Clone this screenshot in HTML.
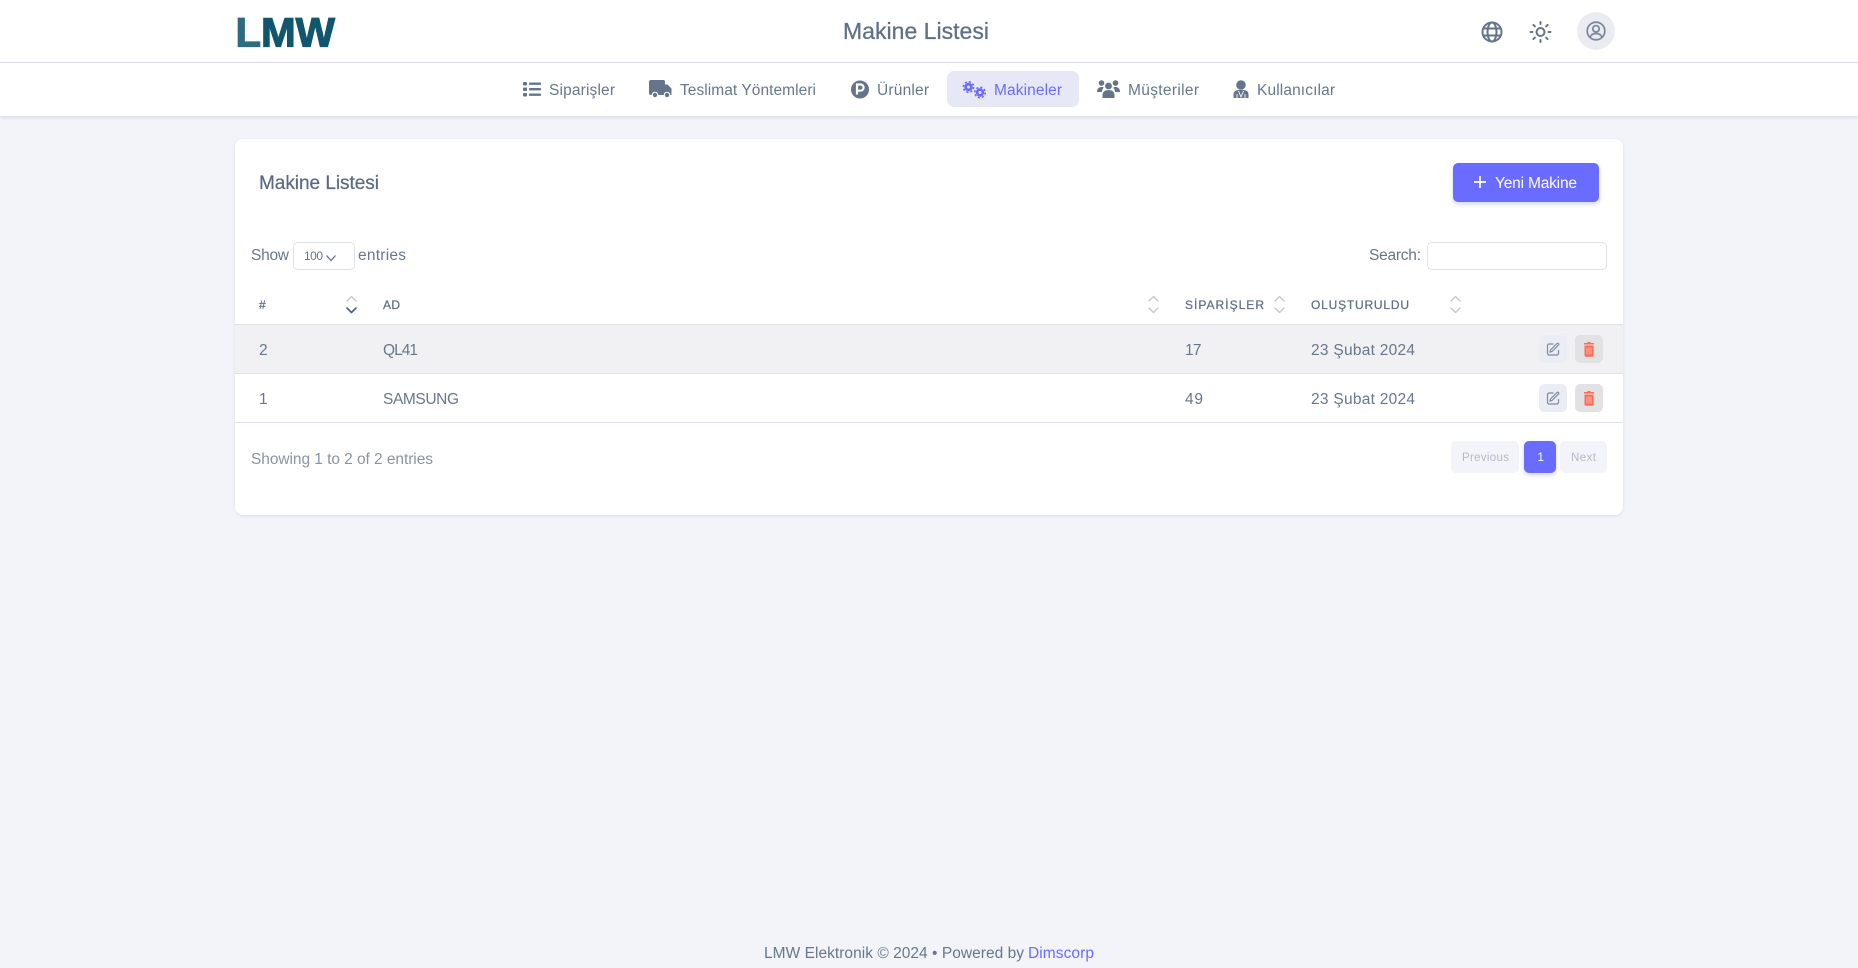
<!DOCTYPE html>
<html lang="tr">
<head>
<meta charset="utf-8">
<title>Makine Listesi</title>
<style>
html,body{margin:0;padding:0;width:1858px;height:968px;overflow:hidden;background:#f3f4f9;font-family:"Liberation Sans",sans-serif}
.b{position:absolute;box-sizing:border-box}
svg.o{position:absolute;left:0;top:0}
svg text{font-family:"Liberation Sans",sans-serif;font-size:15.5px;fill:#67778e}
.th{font-size:12px;fill:#5f6f87;stroke:#5f6f87;stroke-width:.25}
.ic{fill:#64748b}
.ch{fill:none;stroke:#c3c8d8;stroke-width:1.4;stroke-linecap:round;stroke-linejoin:round}
</style>
</head>
<body>
<div class="b" style="left:0;top:0;width:1858px;height:63px;background:#fff;border-bottom:1px solid #dfe1e8"></div>
<div class="b" style="left:0;top:63px;width:1858px;height:53px;background:#fff;box-shadow:0 1px 4px rgba(67,89,113,.18)"></div>
<div class="b" style="left:947px;top:71px;width:132px;height:36px;background:#e7e8f6;border-radius:7px"></div>
<div class="b" style="left:1577px;top:12px;width:38px;height:38px;background:#ebecf2;border-radius:50%"></div>

<div class="b" style="left:235px;top:139px;width:1388px;height:376px;background:#fff;border-radius:8px;box-shadow:0 1px 3px rgba(67,89,113,.14)"></div>
<div class="b" style="left:1453px;top:163px;width:146px;height:39px;background:#696cff;border-radius:5px;box-shadow:0 2px 5px rgba(105,108,255,.3)"></div>
<div class="b" style="left:293px;top:242px;width:62px;height:28px;background:#fff;border:1px solid #dfe1e8;border-radius:5px"></div>
<div class="b" style="left:1427px;top:242px;width:180px;height:28px;background:#fff;border:1px solid #dfe1e8;border-radius:5px"></div>

<div class="b" style="left:235px;top:324px;width:1388px;height:50px;background:#f1f1f3;border-top:1px solid #dfe1e8;border-bottom:1px solid #dfe1e8"></div>
<div class="b" style="left:235px;top:422px;width:1388px;height:1px;background:#dfe1e8"></div>

<div class="b" style="left:1539px;top:335px;width:28px;height:28px;background:#ebedf4;border-radius:5px"></div>
<div class="b" style="left:1575px;top:335px;width:28px;height:28px;background:#e2e2e4;border-radius:5px"></div>
<div class="b" style="left:1539px;top:384px;width:28px;height:28px;background:#ebedf4;border-radius:5px"></div>
<div class="b" style="left:1575px;top:384px;width:28px;height:28px;background:#e2e2e4;border-radius:5px"></div>

<div class="b" style="left:1451px;top:441px;width:68px;height:32px;background:#f3f4f9;border-radius:5px"></div>
<div class="b" style="left:1524px;top:441px;width:32px;height:32px;background:#696cff;border-radius:5px;box-shadow:0 2px 5px rgba(105,108,255,.3)"></div>
<div class="b" style="left:1560px;top:441px;width:47px;height:32px;background:#f3f4f9;border-radius:5px"></div>

<svg class="o" width="1858" height="968" viewBox="0 0 1858 968" xmlns="http://www.w3.org/2000/svg">
  <!-- logo -->
  <text x="235.500" y="46.500" textLength="99.500" lengthAdjust="spacingAndGlyphs" style="font-size:41px;font-weight:bold;fill:#10566e;stroke:#10566e;stroke-width:1.200"><tspan style="fill:#2f6b80;stroke:#2f6b80">L</tspan>MW</text>

  <!-- header -->
  <text x="843" y="39" textLength="146" style="font-size:23px;fill:#5f6f87;stroke:#5f6f87;stroke-width:.25">Makine Listesi</text>
  <g fill="none" stroke="#64748b" stroke-width="2">
    <circle cx="1492" cy="32" r="9.500"/>
    <ellipse cx="1492" cy="32" rx="4.500" ry="9.500"/>
    <path d="M1483 28.500h18M1483 35.500h18"/>
    <circle cx="1540.500" cy="32" r="4"/>
    <path stroke-linecap="round" d="M1540.500 22v2M1540.500 40v2M1530.500 32h2M1548.500 32h2M1533.400 24.900l1.500 1.500M1546.100 37.600l1.500 1.500M1533.400 39.100l1.500-1.500M1546.100 26.400l1.500-1.500"/>
  </g>
  <g fill="none" stroke="#7c8aa0" stroke-width="1.800">
    <circle cx="1596" cy="31" r="8.800"/>
    <circle cx="1596" cy="28.800" r="3.200"/>
    <path d="M1590 37.500c1-3 3-4 6-4s5 1 6 4"/>
  </g>

  <!-- nav icons -->
  <g class="ic">
    <rect x="523" y="82" width="4" height="3.500" rx="1"/><rect x="523" y="87.500" width="4" height="3.500" rx="1"/><rect x="523" y="93" width="4" height="3.500" rx="1"/>
    <rect x="529" y="82.500" width="12" height="2.400" rx=".8"/><rect x="529" y="88" width="12" height="2.400" rx=".8"/><rect x="529" y="93.500" width="12" height="2.400" rx=".8"/>
  </g>
  <g class="ic">
    <path d="M651 80h12a2 2 0 0 1 2 2v2.500h2.500l4 4v6.500H651a2 2 0 0 1-2-2V82a2 2 0 0 1 2-2z"/>
    <circle cx="655" cy="95" r="3.300" fill="#fff"/><circle cx="667" cy="95" r="3.300" fill="#fff"/>
    <circle cx="655" cy="95" r="2.200"/><circle cx="667" cy="95" r="2.200"/>
  </g>
  <circle cx="860" cy="89.500" r="9" class="ic"/>
  <path d="M857 94.500v-10h3.500a3 3 0 0 1 0 6.200H857" fill="none" stroke="#fff" stroke-width="2.200"/>
  <g fill="#696cff">
    <circle cx="968.500" cy="87" r="4.200"/>
    <circle cx="968.500" cy="87" r="5.200" fill="none" stroke="#696cff" stroke-width="1.600" stroke-dasharray="2.100 2"/>
    <circle cx="968.500" cy="87" r="1.500" fill="#e7e8f6"/>
    <circle cx="980" cy="92.500" r="4.200"/>
    <circle cx="980" cy="92.500" r="5.200" fill="none" stroke="#696cff" stroke-width="1.600" stroke-dasharray="2.100 2"/>
    <circle cx="980" cy="92.500" r="1.500" fill="#e7e8f6"/>
  </g>
  <g class="ic">
    <circle cx="1101.500" cy="83" r="2.800"/><circle cx="1115.500" cy="83" r="2.800"/><circle cx="1108.500" cy="86" r="3.400"/>
    <path d="M1097 92c0-3 1.500-5 4.500-5 1 0 1.800.2 2.400.6-1.200 1-2 2.600-2 4.400zM1120 92c0-3-1.500-5-4.500-5-1 0-1.800.2-2.400.6 1.200 1 2 2.600 2 4.400z"/>
    <path d="M1102.500 98v-3c0-3 2.500-5 6-5s6 2 6 5v3z"/>
  </g>
  <g class="ic">
    <circle cx="1241" cy="85" r="4.800"/>
    <path d="M1233.500 98v-3.500c0-3 2.200-4.500 5.500-4.500h4c3.300 0 5.500 1.500 5.500 4.500V98z"/>
  </g>
  <path d="M1238.500 91l2.500 6 2.500-6M1237 94v4M1245 94v4" fill="none" stroke="#fff" stroke-width=".9"/>

  <!-- nav text -->
  <text x="549" y="95" textLength="66">Siparişler</text>
  <text x="680" y="95" textLength="136">Teslimat Yöntemleri</text>
  <text x="877" y="95" textLength="52">Ürünler</text>
  <text x="994" y="95" textLength="68" style="fill:#696cff">Makineler</text>
  <text x="1128" y="95" textLength="71">Müşteriler</text>
  <text x="1257" y="95" textLength="78">Kullanıcılar</text>

  <!-- card head -->
  <text x="259" y="189" textLength="120" style="font-size:19px;fill:#5b6b85;stroke:#5b6b85;stroke-width:.25">Makine Listesi</text>
  <path d="M1480 176v12M1474 182h12" stroke="#fff" stroke-width="1.700" fill="none"/>
  <text x="1495" y="188" textLength="82" style="fill:#fff">Yeni Makine</text>

  <!-- controls -->
  <text x="251" y="260" textLength="38">Show</text>
  <text x="304" y="260" textLength="19" style="font-size:12px">100</text>
  <path d="M326.500 255.500l4.500 5 4.500-5" fill="none" stroke="#64748b" stroke-width="1.300"/>
  <text x="358" y="260" textLength="48">entries</text>
  <text x="1369" y="260" textLength="52">Search:</text>

  <!-- table head -->
  <text x="259" y="309" class="th" textLength="7">#</text>
  <text x="383" y="309" class="th" textLength="17">AD</text>
  <text x="1185" y="309" class="th" textLength="79">SİPARİŞLER</text>
  <text x="1311" y="309" class="th" textLength="98">OLUŞTURULDU</text>

  <path class="ch" d="M347 301l4.500-4.500 4.500 4.500"/>
  <path d="M347 308l4.500 4.500 4.500-4.500" fill="none" stroke="#4f5f78" stroke-width="1.600" stroke-linecap="round" stroke-linejoin="round"/>
  <path class="ch" d="M1149 301l4.500-4.500 4.500 4.500M1149 308l4.500 4.500 4.500-4.500"/>
  <path class="ch" d="M1275 301l4.500-4.500 4.500 4.500M1275 308l4.500 4.500 4.500-4.500"/>
  <path class="ch" d="M1451 301l4.500-4.500 4.500 4.500M1451 308l4.500 4.500 4.500-4.500"/>

  <!-- rows -->
  <text x="259" y="355">2</text>
  <text x="383" y="355" textLength="35">QL41</text>
  <text x="1185" y="355" textLength="16.500">17</text>
  <text x="1311" y="355" textLength="104">23 Şubat 2024</text>
  <text x="259" y="404">1</text>
  <text x="383" y="404" textLength="76">SAMSUNG</text>
  <text x="1185" y="404" textLength="18">49</text>
  <text x="1311" y="404" textLength="104">23 Şubat 2024</text>

  <!-- action icons -->
  <g fill="none" stroke="#7f8ba0" stroke-width="1.200">
    <path d="M1553.500 344h-4.500a1.500 1.500 0 0 0-1.500 1.500v8a1.500 1.500 0 0 0 1.500 1.500h8a1.500 1.500 0 0 0 1.500-1.500V350"/>
    <path d="M1552 351.500l-2 .5.500-2 6.500-6.500a1 1 0 0 1 1.500 1.500z"/>
    <path d="M1553.500 393h-4.500a1.500 1.500 0 0 0-1.500 1.500v8a1.500 1.500 0 0 0 1.500 1.500h8a1.500 1.500 0 0 0 1.500-1.500V399"/>
    <path d="M1552 400.500l-2 .5.500-2 6.500-6.500a1 1 0 0 1 1.500 1.500z"/>
  </g>
  <g fill="#ff6b55">
    <path d="M1584.500 345.500h9v10a1.200 1.200 0 0 1-1.200 1.200h-6.600a1.200 1.200 0 0 1-1.200-1.200zM1584 343h3l.8-1h2.400l.8 1h3v1.500h-10z"/>
    <path d="M1584.500 394.500h9v10a1.200 1.200 0 0 1-1.200 1.200h-6.600a1.200 1.200 0 0 1-1.200-1.200zM1584 392h3l.8-1h2.400l.8 1h3v1.500h-10z"/>
  </g>
  <path d="M1587 347.500v7M1589 347.500v7M1591 347.500v7M1587 396.500v7M1589 396.500v7M1591 396.500v7" stroke="#f3c9c2" stroke-width=".8" fill="none"/>

  <!-- footer of card -->
  <text x="251" y="464" textLength="182" style="fill:#8a94a6">Showing 1 to 2 of 2 entries</text>
  <text x="1462" y="461" textLength="47" style="font-size:11.500px;fill:#b4b9c9">Previous</text>
  <text x="1537.500" y="461" style="font-size:11.500px;fill:#fff">1</text>
  <text x="1571" y="461" textLength="25" style="font-size:11.500px;fill:#b4b9c9">Next</text>

  <!-- page footer -->
  <text x="764" y="958" textLength="260">LMW Elektronik © 2024 • Powered by</text>
  <text x="1028" y="958" textLength="66" style="fill:#696cff">Dimscorp</text>
</svg>
</body>
</html>
